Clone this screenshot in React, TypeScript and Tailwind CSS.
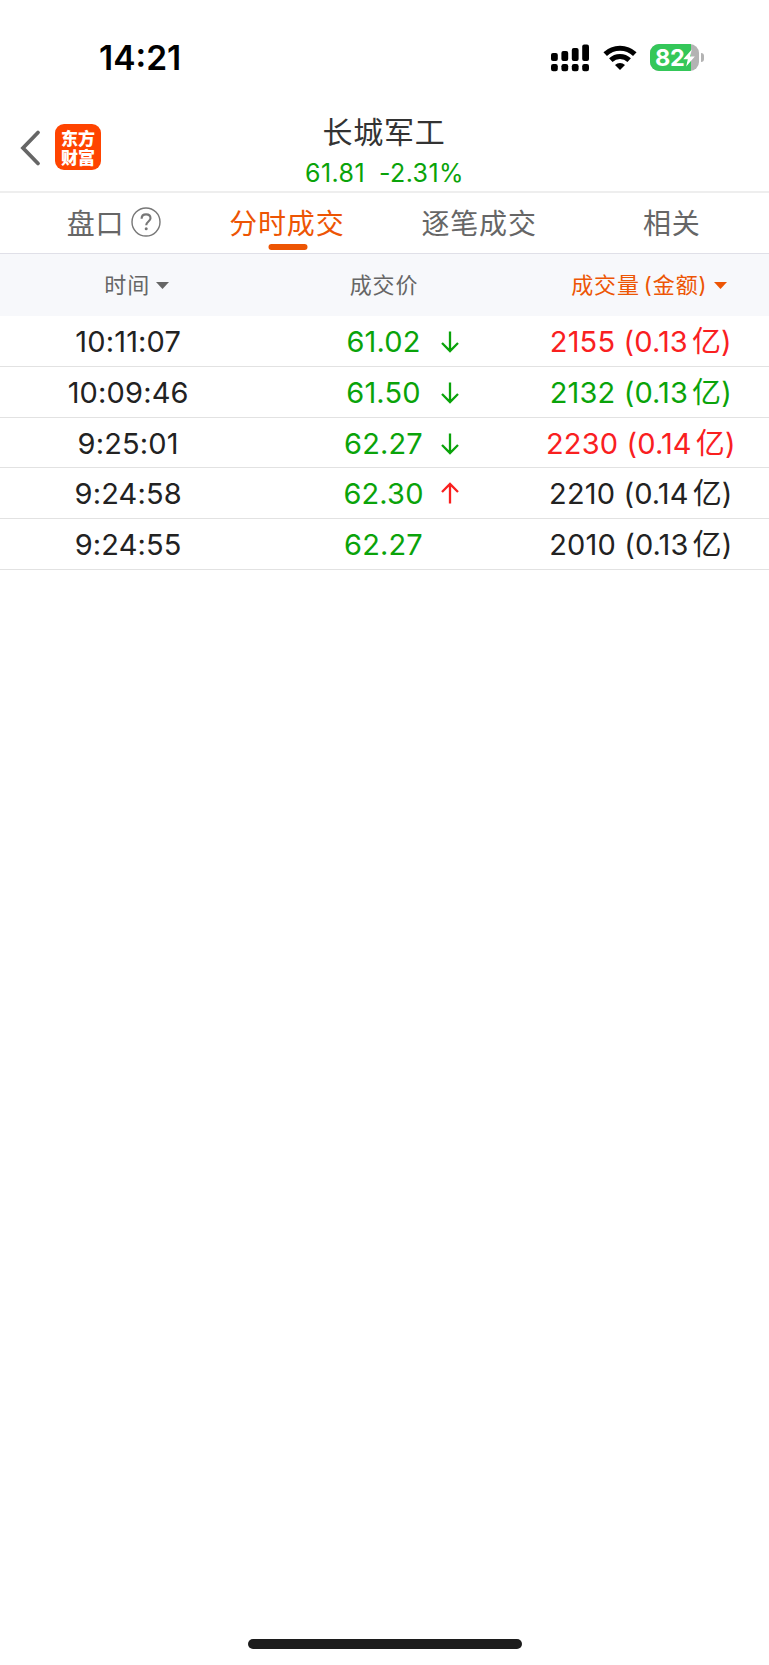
type Tone = "up" | "down" | "flat";

interface Trade {
  time: string;
  price: string;
  arrow?: "up" | "down";
  volume: string;
  amount: string;
  tone: Tone;
}

const trades: Trade[] = [
  { time: "10:11:07", price: "61.02", arrow: "down", volume: "2155", amount: "0.13", tone: "up" },
  { time: "10:09:46", price: "61.50", arrow: "down", volume: "2132", amount: "0.13", tone: "down" },
  { time: "9:25:01", price: "62.27", arrow: "down", volume: "2230", amount: "0.14", tone: "up" },
  { time: "9:24:58", price: "62.30", arrow: "up", volume: "2210", amount: "0.14", tone: "flat" },
  { time: "9:24:55", price: "62.27", volume: "2010", amount: "0.13", tone: "flat" },
];

const toneClass: Record<Tone, string> = {
  up: "text-[#f9201f]",
  down: "text-[#0aa30a]",
  flat: "text-[#222222]",
};

function StatusBar() {
  return (
    <div className="flex h-[115px] items-center justify-between pl-[99px] pr-[65px]">
      <span className="pt-[3px] text-[33.5px] font-semibold leading-none text-black">14:21</span>
      <div className="flex items-center">
        {/* Dual SIM signal */}
        <svg width="38" height="28" viewBox="0 0 38 28" fill="#000">
          <rect x="0" y="9" width="6.8" height="8" rx="2" />
          <rect x="10.4" y="7" width="6.8" height="10" rx="2" />
          <rect x="20.8" y="4" width="6.8" height="13" rx="2" />
          <rect x="31.2" y="0.5" width="6.8" height="16.5" rx="2" />
          <rect x="0" y="20" width="6.8" height="7.3" rx="2.2" />
          <rect x="10.4" y="20" width="6.8" height="7.3" rx="2.2" />
          <rect x="20.8" y="20" width="6.8" height="7.3" rx="2.2" />
          <rect x="31.2" y="20" width="6.8" height="7.3" rx="2.2" />
        </svg>
        {/* Wifi */}
        <svg className="ml-[14px]" width="34" height="26" viewBox="0 0 34 26" fill="none" stroke="#000">
          <path d="M2.2 9.1 A21.5 21.5 0 0 1 31.8 9.1" strokeWidth="5.1" />
          <path d="M7.8 15.1 A13.4 13.4 0 0 1 26.2 15.1" strokeWidth="5" />
          <path d="M17 25 L12 19.9 A7.4 7.4 0 0 1 22 19.9 Z" fill="#000" stroke="none" />
        </svg>
        {/* Battery */}
        <div className="relative ml-[13px] flex h-[27px] w-[49px] items-center overflow-hidden rounded-[9px] bg-[#b3b3b3]">
          <div className="absolute inset-y-0 left-0 w-[41px] bg-[#34c759]" />
          <span className="relative pl-[5px] text-[23.5px] font-bold leading-none tracking-[-0.4px] text-white">82</span>
          <svg className="relative -ml-px shrink-0" width="12" height="18" viewBox="0 0 12 18" fill="#fff">
            <path d="M8.8 0.4 L0.2 10.2 H4.8 L3.2 17.6 L11.8 7.4 H7.2 Z" />
          </svg>
        </div>
        <div className="ml-[2px] h-[9px] w-[3px] rounded-r-full bg-[#b3b3b3]" />
      </div>
    </div>
  );
}

function Header() {
  return (
    <header className="grid h-[78px] grid-cols-[1fr_auto_1fr] border-b-2 border-[#eeeeee]">
      <div className="flex items-start pl-[20px] pt-[9px]">
        <svg width="22" height="48" viewBox="0 0 22 48" fill="none" stroke="#666" strokeWidth="3.8">
          <path d="M18 8.5 L3 24 L18 39.5" strokeLinecap="round" />
        </svg>
        <div className="ml-[13px] w-[46px] rounded-[9px] bg-[#ff4400] pb-[4px] pt-[4px] text-center font-['Noto_Sans_CJK_SC',sans-serif] text-[17px] font-black leading-[19px] text-white">
          东方
          <br />
          财富
        </div>
      </div>
      <div className="flex flex-col items-center">
        <h1 className="mr-px text-[30px] leading-[34px] tracking-[0.7px] text-[#333333]">长城军工</h1>
        <p className="mt-[8px] flex gap-[14px] text-[25px] leading-[32px] tracking-[0.4px] text-[#0aa30a]">
          <span>61.81</span>
          <span>-2.31%</span>
        </p>
      </div>
      <div />
    </header>
  );
}

function Tabs() {
  return (
    <nav className="grid h-[61px] grid-cols-4 border-b border-[#e0e0e8] text-[28px] leading-[62px] tracking-[0.8px] text-[#666666]">
      <div className="flex items-center justify-center pl-[36px]">
        盘口
        <svg className="mb-[4px] ml-[7px]" width="30" height="30" viewBox="0 0 30 30" fill="none" stroke="#777">
          <circle cx="15" cy="15" r="14" strokeWidth="1.4" />
          <path d="M10.6 11.8 C10.6 9 12.4 7.4 15.1 7.4 C17.8 7.4 19.5 9 19.5 11.3 C19.5 14.4 15.2 14.7 15.2 18.2" strokeWidth="2.1" />
          <circle cx="15.2" cy="21.8" r="1.5" fill="#777" stroke="none" />
        </svg>
      </div>
      <div className="relative pr-[3px] text-center text-[#ed5504]">
        分时成交
        <span className="absolute bottom-[5px] left-1/2 h-[6px] w-[39px] -translate-x-1/2 rounded-full bg-[#ed5504]" />
      </div>
      <div className="pr-[3px] text-center">逐笔成交</div>
      <div className="pr-[2px] text-center">相关</div>
    </nav>
  );
}

function Caret() {
  return (
    <svg className="ml-[6px] mt-px" width="13" height="7" viewBox="0 0 13 7" fill="currentColor">
      <path d="M0 0 H13 L6.5 7 Z" />
    </svg>
  );
}

function PriceArrow({ direction }: { direction: "up" | "down" }) {
  return (
    <svg
      className={
        direction === "up"
          ? "absolute left-[185px] top-[14px] rotate-180 text-[#f9201f]"
          : "absolute left-[185px] top-[15px] text-[#0aa30a]"
      }
      width="18"
      height="22"
      viewBox="0 0 18 22"
      fill="none"
      stroke="currentColor"
      strokeWidth="2.3"
    >
      <path d="M9 0.5 V20 M1 12 L9 20 L17 12" />
    </svg>
  );
}

export default function App() {
  return (
    <div className="flex min-h-[1665px] w-full flex-col bg-white font-['Inter','Noto_Sans_CJK_SC',sans-serif]">
      <StatusBar />
      <Header />
      <Tabs />

      {/* Column titles */}
      <div className="grid h-[62px] grid-cols-3 bg-[#f7f8fb] text-[22px] tracking-[0.9px] text-[#666666]">
        <div className="flex items-center justify-center pl-[17px]">
          时间
          <Caret />
        </div>
        <div className="flex items-center justify-center pr-px">成交价</div>
        <div className="flex items-center justify-center pl-[16px] text-[#ed5504]">
          成交量
          <span className="ml-[4px]">(金额)</span>
          <Caret />
        </div>
      </div>

      {/* Trades */}
      {trades.map((trade) => (
        <div
          key={trade.time}
          className="grid h-[50.75px] grid-cols-3 border-b border-[#e2e2e2] text-center text-[29px] font-[380] leading-[52px] tracking-[0.15px]"
        >
          <div className="text-[#222222]">{trade.time}</div>
          <div className="relative pr-[2px] text-[#0aa30a]">
            {trade.price}
            {trade.arrow && <PriceArrow direction={trade.arrow} />}
          </div>
          <div className={toneClass[trade.tone]}>
            {trade.volume} ({trade.amount}
            <span className="ml-[4px]">亿</span>)
          </div>
        </div>
      ))}

      {/* Home indicator */}
      <div className="mx-auto mb-[16px] mt-auto h-[10px] w-[274px] rounded-full bg-[#1c1c1c]" />
    </div>
  );
}
